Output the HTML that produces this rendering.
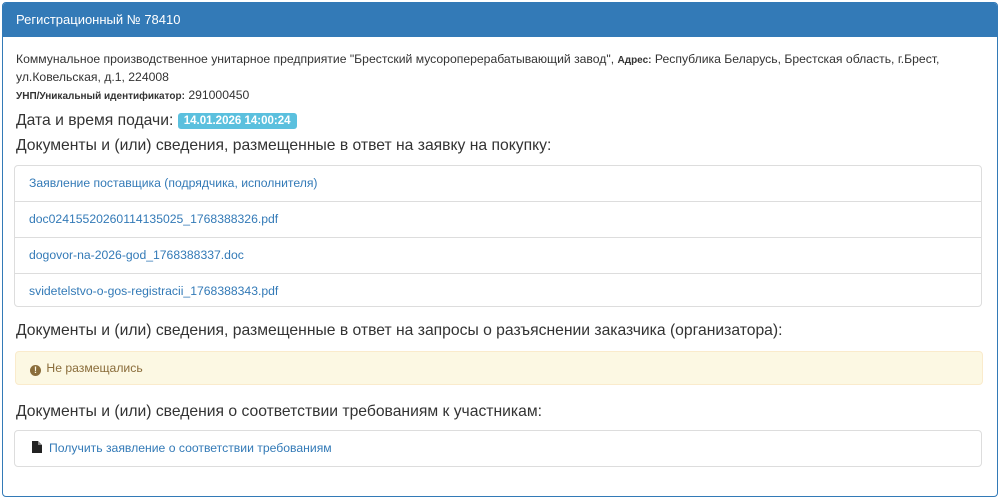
<!DOCTYPE html>
<html><head><meta charset="utf-8"><style>
body{margin:0;background:#fff;font-family:"Liberation Sans",sans-serif;color:#333;}
.panel{position:absolute;left:2px;top:2px;width:994px;height:493px;border:1px solid #337ab7;border-radius:4px;overflow:hidden}
.hd{background:#337ab7;color:#fff;height:34px;line-height:34px;padding-left:13px;font-size:13px}
.l{position:absolute;left:16px;white-space:nowrap}
.h{font-size:15.7px}
.lab{background:#5bc0de;color:#fff;font-weight:bold;font-size:11.5px;padding:2px 6px;border-radius:3px;position:relative;top:-1px}
.lg{position:absolute;left:14px;width:966px;border:1px solid #ddd;border-radius:4px}
.lg div{height:35px;line-height:35px;padding-left:14px;border-top:1px solid #ddd;color:#337ab7;font-size:12.2px}
.lg div:first-child{border-top:0}
</style></head><body>
<div class="panel">
<div class="hd">Регистрационный № 78410</div>
</div>
<div class="l" style="top:52px;font-size:12.2px">Коммунальное производственное унитарное предприятие "Брестский мусороперерабатывающий завод", <b style="font-size:10px">Адрес:</b> Республика Беларусь, Брестская область, г.Брест,</div>
<div class="l" style="top:70px;font-size:12.2px">ул.Ковельская, д.1, 224008</div>
<div class="l" style="top:88px;font-size:12.2px"><b style="font-size:10px">УНП/Уникальный идентификатор:</b> 291000450</div>
<div class="l h" style="top:112px">Дата и время подачи: <span class="lab">14.01.2026 14:00:24</span></div>
<div class="l h" style="top:137px">Документы и (или) сведения, размещенные в ответ на заявку на покупку:</div>
<div class="lg" style="top:165px;height:140px">
<div>Заявление поставщика (подрядчика, исполнителя)</div>
<div>doc02415520260114135025_1768388326.pdf</div>
<div>dogovor-na-2026-god_1768388337.doc</div>
<div>svidetelstvo-o-gos-registracii_1768388343.pdf</div>
</div>
<div class="l h" style="top:322px">Документы и (или) сведения, размещенные в ответ на запросы о разъяснении заказчика (организатора):</div>
<div style="position:absolute;left:15px;top:351px;width:968px;height:34px;background:#fcf8e3;border:1px solid #faebcc;border-radius:4px;color:#8a6d3b;font-size:12.2px;line-height:33px;box-sizing:border-box;padding-left:14px"><span style="display:inline-block;width:11px;height:11px;border-radius:50%;background:#8a6d3b;color:#fcf8e3;font-size:9px;line-height:11px;text-align:center;font-weight:bold;vertical-align:-1px;margin-right:2px">!</span> Не размещались</div>
<div class="l h" style="top:403px">Документы и (или) сведения о соответствии требованиям к участникам:</div>
<div class="lg" style="top:430px;height:35px"><div style="padding-left:17px"><svg width="10" height="12" viewBox="0 0 10 12" style="vertical-align:-1px;margin-right:7px"><path d="M0 0H6L10 4V12H0Z" fill="#222"/><path d="M6 0V4H10" fill="#888"/></svg>Получить заявление о соответствии требованиям</div></div>
</body></html>
